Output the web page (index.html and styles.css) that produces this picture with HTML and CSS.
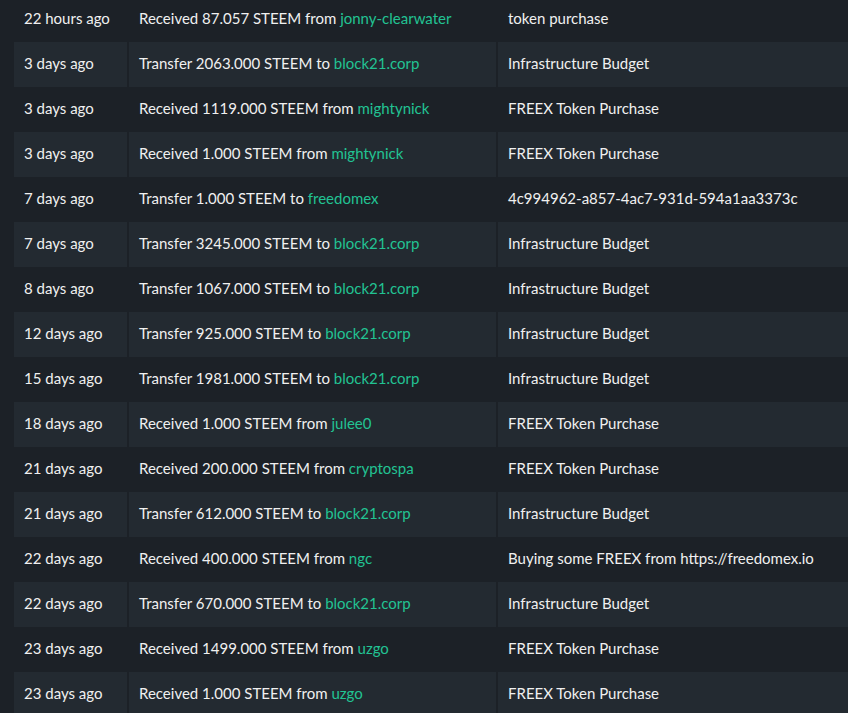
FILE: index.html
```html
<!DOCTYPE html>
<html>
<head>
    <meta charset="UTF-8">
    <title>Transfer history</title>
    <link rel="stylesheet" href="styles.css">
</head>
<body>
<table class="history">
    <tbody>
    <tr><td class="when">22 hours ago</td><td class="what">Received 87.057 STEEM from <a href="#">jonny-clearwater</a></td><td class="memo">token purchase</td></tr>
    <tr><td class="when">3 days ago</td><td class="what">Transfer 2063.000 STEEM to <a href="#">block21.corp</a></td><td class="memo">Infrastructure Budget</td></tr>
    <tr><td class="when">3 days ago</td><td class="what">Received 1119.000 STEEM from <a href="#">mightynick</a></td><td class="memo">FREEX Token Purchase</td></tr>
    <tr><td class="when">3 days ago</td><td class="what">Received 1.000 STEEM from <a href="#">mightynick</a></td><td class="memo">FREEX Token Purchase</td></tr>
    <tr><td class="when">7 days ago</td><td class="what">Transfer 1.000 STEEM to <a href="#">freedomex</a></td><td class="memo">4c994962-a857-4ac7-931d-594a1aa3373c</td></tr>
    <tr><td class="when">7 days ago</td><td class="what">Transfer 3245.000 STEEM to <a href="#">block21.corp</a></td><td class="memo">Infrastructure Budget</td></tr>
    <tr><td class="when">8 days ago</td><td class="what">Transfer 1067.000 STEEM to <a href="#">block21.corp</a></td><td class="memo">Infrastructure Budget</td></tr>
    <tr><td class="when">12 days ago</td><td class="what">Transfer 925.000 STEEM to <a href="#">block21.corp</a></td><td class="memo">Infrastructure Budget</td></tr>
    <tr><td class="when">15 days ago</td><td class="what">Transfer 1981.000 STEEM to <a href="#">block21.corp</a></td><td class="memo">Infrastructure Budget</td></tr>
    <tr><td class="when">18 days ago</td><td class="what">Received 1.000 STEEM from <a href="#">julee0</a></td><td class="memo">FREEX Token Purchase</td></tr>
    <tr><td class="when">21 days ago</td><td class="what">Received 200.000 STEEM from <a href="#">cryptospa</a></td><td class="memo">FREEX Token Purchase</td></tr>
    <tr><td class="when">21 days ago</td><td class="what">Transfer 612.000 STEEM to <a href="#">block21.corp</a></td><td class="memo">Infrastructure Budget</td></tr>
    <tr><td class="when">22 days ago</td><td class="what">Received 400.000 STEEM from <a href="#">ngc</a></td><td class="memo">Buying some FREEX from https://freedomex.io</td></tr>
    <tr><td class="when">22 days ago</td><td class="what">Transfer 670.000 STEEM to <a href="#">block21.corp</a></td><td class="memo">Infrastructure Budget</td></tr>
    <tr><td class="when">23 days ago</td><td class="what">Received 1499.000 STEEM from <a href="#">uzgo</a></td><td class="memo">FREEX Token Purchase</td></tr>
    <tr><td class="when">23 days ago</td><td class="what">Received 1.000 STEEM from <a href="#">uzgo</a></td><td class="memo">FREEX Token Purchase</td></tr>
    </tbody>
</table>
</body>
</html>
```
FILE: styles.css
```css
html,body{
    margin: 0;
    padding: 0;
}
body{
    background-color: #1c2127;
    color: #f0f0f0;
    font: 15px/20px Lato, "Noto Sans", sans-serif;
    overflow: hidden;
}
.history{
    width: 838px;
    margin: -3px 0 0 12px;
    border-collapse: separate;
    border-spacing: 2px 0;
    table-layout: fixed;
}
.history td{
    height: 45px;
    padding: 0 10px 4px;
    box-sizing: border-box;
    vertical-align: middle;
    white-space: nowrap;
}
.history td.when{
    width: 113px;
}
.history td.what{
    width: 367px;
}
.history tr:nth-child(even) td{
    background-color: #232a31;
}
.history a{
    color: #22c393;
    text-decoration: none;
}
```
